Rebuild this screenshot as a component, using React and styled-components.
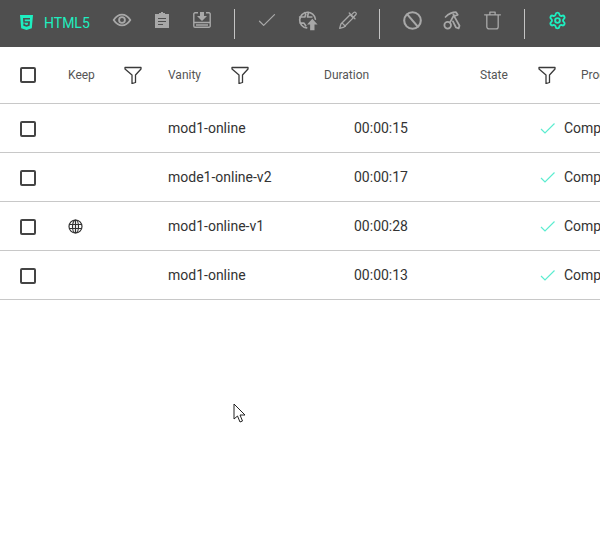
import React from "react";
import styled, { createGlobalStyle } from "styled-components";
import { Settings } from "lucide-react";

const Global = createGlobalStyle`
  html, body { margin: 0; padding: 0; background: #fff; }
  body { width: 600px; height: 533px; overflow: hidden; font-family: Roboto, "Liberation Sans", sans-serif; }
`;
const Page = styled.div`
  position: relative; width: 600px; height: 533px; overflow: hidden; background: #fff;
`;
const Toolbar = styled.div`
  display: flex; align-items: center; height: 47px; background: #4f4f4f; padding-left: 20px;
`;
const Brand = styled.div`
  display: flex; align-items: center; gap: 11px; width: 82px; flex: none; color: #1eeec0; font-size: 14px;
  margin-top: -2px;
`;
const IconSlot = styled.div`
  display: flex; align-items: center; justify-content: center; width: 40px; height: 47px; flex: none;
  margin-top: -7px;
  color: ${p => (p.$accent ? "#1eeec0" : "#a8a8a8")};
`;
const Divider = styled.div`
  width: 1px; height: 30px; background: #c4c4c4; margin: 0 12px; flex: none;
`;
const Row = styled.div`
  display: grid; grid-template-columns: 68px 100px 156px 156px 101px 120px; width: 600px;
  align-items: center; height: ${p => (p.$head ? 56 : 48)}px; border-bottom: 1px solid #c8c8c8;
  overflow: hidden; color: ${p => (p.$head ? "#555" : "#333")}; font-size: ${p => (p.$head ? 12 : 14)}px;
`;
const CheckCell = styled.div`display: flex; padding-left: 20px; padding-top: ${p => (p.$body ? 2 : 0)}px;`;
const Box = styled.div`
  box-sizing: border-box; width: 16px; height: 16px; border: 2px solid #444; border-radius: 2px;
`;
const Cell = styled.div`
  display: flex; align-items: center; padding-left: ${p => p.$pad || 0}px; white-space: nowrap;
  grid-column: ${p => (p.$span ? `span ${p.$span}` : "auto")};
`;
const FilterIcon = styled.svg`
  margin-left: ${p => p.$gap}px; width: 18px; height: 18px; flex: none;
`;
const StateIcon = styled.svg`
  width: 15px; height: 15px; margin-right: 9px; flex: none;
`;
const Cursor = styled.svg`
  position: absolute; left: 233px; top: 403px; width: 14px; height: 21px;
`;

const Svg = ({ size = 18, children, sw = 1.5 }) => (
  <svg width={size} height={size} viewBox="0 0 24 24" fill="none" stroke="currentColor" strokeWidth={sw} strokeLinecap="round" strokeLinejoin="round">{children}</svg>
);
const Html5 = () => (
  <svg width="13" height="15" viewBox="0 0 13 15"><path fill="#1eeec0" d="M0 0h13l-1.200 13.200L6.500 15l-5.300-1.800z" /><path fill="#4f4f4f" d="M3 3h7v1.500H4.700l.1 1.700H10l-.4 4.600-3.100 1-3.100-1-.2-2.200H5l.1 1 1.400.4 1.400-.4.1-1.900H3.300z" /></svg>
);
const Eye = () => <Svg size={20} sw={2.200}><path d="M2 12c3-4.500 6.300-6.500 10-6.500S19 7.500 22 12c-3 4.500-6.300 6.500-10 6.500S5 16.500 2 12z" /><circle cx="12" cy="12" r="3.500" /></Svg>;
const Clip = () => (
  <svg width="14" height="16" viewBox="0 0 14 16"><path fill="#a8a8a8" d="M0 2h4V1h2V0h2v1h2v1h4v14H0z" /><path stroke="#4f4f4f" strokeWidth="1.200" d="M3 6.500h8M3 9.500h8M3 12.500h5" /></svg>
);
const Save = () => (
  <svg width="18" height="16" viewBox="0 0 18 16" fill="none" stroke="currentColor" strokeWidth="1.400" strokeLinejoin="round">
    <path d="M5 .8H2A1.200 1.200 0 0 0 .8 2v12A1.200 1.200 0 0 0 2 15.200h14a1.200 1.200 0 0 0 1.200-1.200V2A1.200 1.200 0 0 0 16 .8h-3" />
    <path d="M1 10.500h16M3 13h12" />
    <path fill="currentColor" stroke="none" d="M7 0h4v4h3l-5 5-5-5h3z" />
  </svg>
);
const Check = () => <Svg size={20} sw={1.500}><path d="M3 13.500l5 5L21 5.500" /></Svg>;
const GlobeUp = () => (
  <Svg size={21} sw={1.900}><path d="M11 20.500a9 9 0 1 1 10-10" /><path d="M3 8h6l1-3-1-2M4 15h4l2 3M13 3l-1 5h5" /><path fill="currentColor" stroke="none" d="M17.500 10l6 6.500H20V23h-5v-6.500h-3.500z" /></Svg>
);
const Pen = () => <Svg size={21} sw={1.500}><path d="M3 21l1.500-5L15 5.500l3.500 3.500L8 19.500z" /><path d="M14 3.500l6.500 6.500M17 5l2-2a1.500 1.500 0 0 1 2.500 2.500L19.500 7.500M6 15l3.500 3.500" /></Svg>;
const Ban = () => <Svg size={21} sw={2.400}><circle cx="12" cy="12" r="9.500" /><path d="M6 5l12 14" /></Svg>;
const Tools = () => (
  <Svg size={21} sw={2}><circle cx="6.500" cy="17.500" r="3.800" /><path d="M4 8c3-3 8-5.500 12-5.500l2 3-5 1.500-4 7.500M13 5l2 4 5 9-1 3-3-1-3.500-7" /></Svg>
);
const Trash = () => <Svg size={21} sw={1.500}><path d="M3 5.500h18M9 5.500V2.500h6v3M5.500 5.500V19a2.500 2.500 0 0 0 2.500 2.500h8a2.500 2.500 0 0 0 2.500-2.500V5.500" /></Svg>;
const Filter = ({ gap }) => (
  <FilterIcon $gap={gap} viewBox="0 0 18 18" fill="none" stroke="#3a3a3a" strokeWidth="1.300"><path d="M1 1.500h16v1.500l-5.500 6v7.500l-3.500 1V9L1 3z" strokeLinejoin="round" /></FilterIcon>
);
const Globe = () => (
  <svg width="15" height="15" viewBox="0 0 15 15" fill="none" stroke="#333" strokeWidth="1.200"><circle cx="7.500" cy="7.500" r="6.500" /><ellipse cx="7.500" cy="7.500" rx="3" ry="6.500" /><path d="M1 5.500h13M1 9.500h13M7.500 1v13" /></svg>
);
const data = [
  ["mod1-online", "00:00:15", false],
  ["mode1-online-v2", "00:00:17", false],
  ["mod1-online-v1", "00:00:28", true],
  ["mod1-online", "00:00:13", false],
];

export default function App() {
  return (
    <Page>
      <Global />
      <Toolbar>
        <Brand><Html5 />HTML5</Brand>
        <IconSlot><Eye /></IconSlot>
        <IconSlot><Clip /></IconSlot>
        <IconSlot><Save /></IconSlot>
        <Divider />
        <IconSlot><Check /></IconSlot>
        <IconSlot><GlobeUp /></IconSlot>
        <IconSlot><Pen /></IconSlot>
        <Divider />
        <IconSlot><Ban /></IconSlot>
        <IconSlot><Tools /></IconSlot>
        <IconSlot><Trash /></IconSlot>
        <Divider />
        <IconSlot $accent><Settings size={19} strokeWidth={2.400} /></IconSlot>
      </Toolbar>
      <Row $head>
        <CheckCell><Box /></CheckCell>
        <Cell>Keep<Filter gap={29} /></Cell>
        <Cell>Vanity<Filter gap={30} /></Cell>
        <Cell>Duration</Cell>
        <Cell>State<Filter gap={30} /></Cell>
        <Cell>Progress</Cell>
      </Row>
      {data.map(([name, time, globe], i) => (
        <Row key={i}>
          <CheckCell $body><Box /></CheckCell>
          <Cell>{globe && <Globe />}</Cell>
          <Cell>{name}</Cell>
          <Cell $pad={30}>{time}</Cell>
          <Cell $pad={60} $span={2}>
            <StateIcon viewBox="0 0 15 15" fill="none" stroke="#5cecd0" strokeWidth="1.200"><path d="M1 8l4 4L14.500 2.500" /></StateIcon>
            Completed
          </Cell>
        </Row>
      ))}
      <Cursor viewBox="0 0 14 21" fill="#fff" stroke="#222" strokeWidth="1"><path d="M1 1v15l3.500-3 2.500 6 2.500-1-2.500-6h5z" /></Cursor>
    </Page>
  );
}
